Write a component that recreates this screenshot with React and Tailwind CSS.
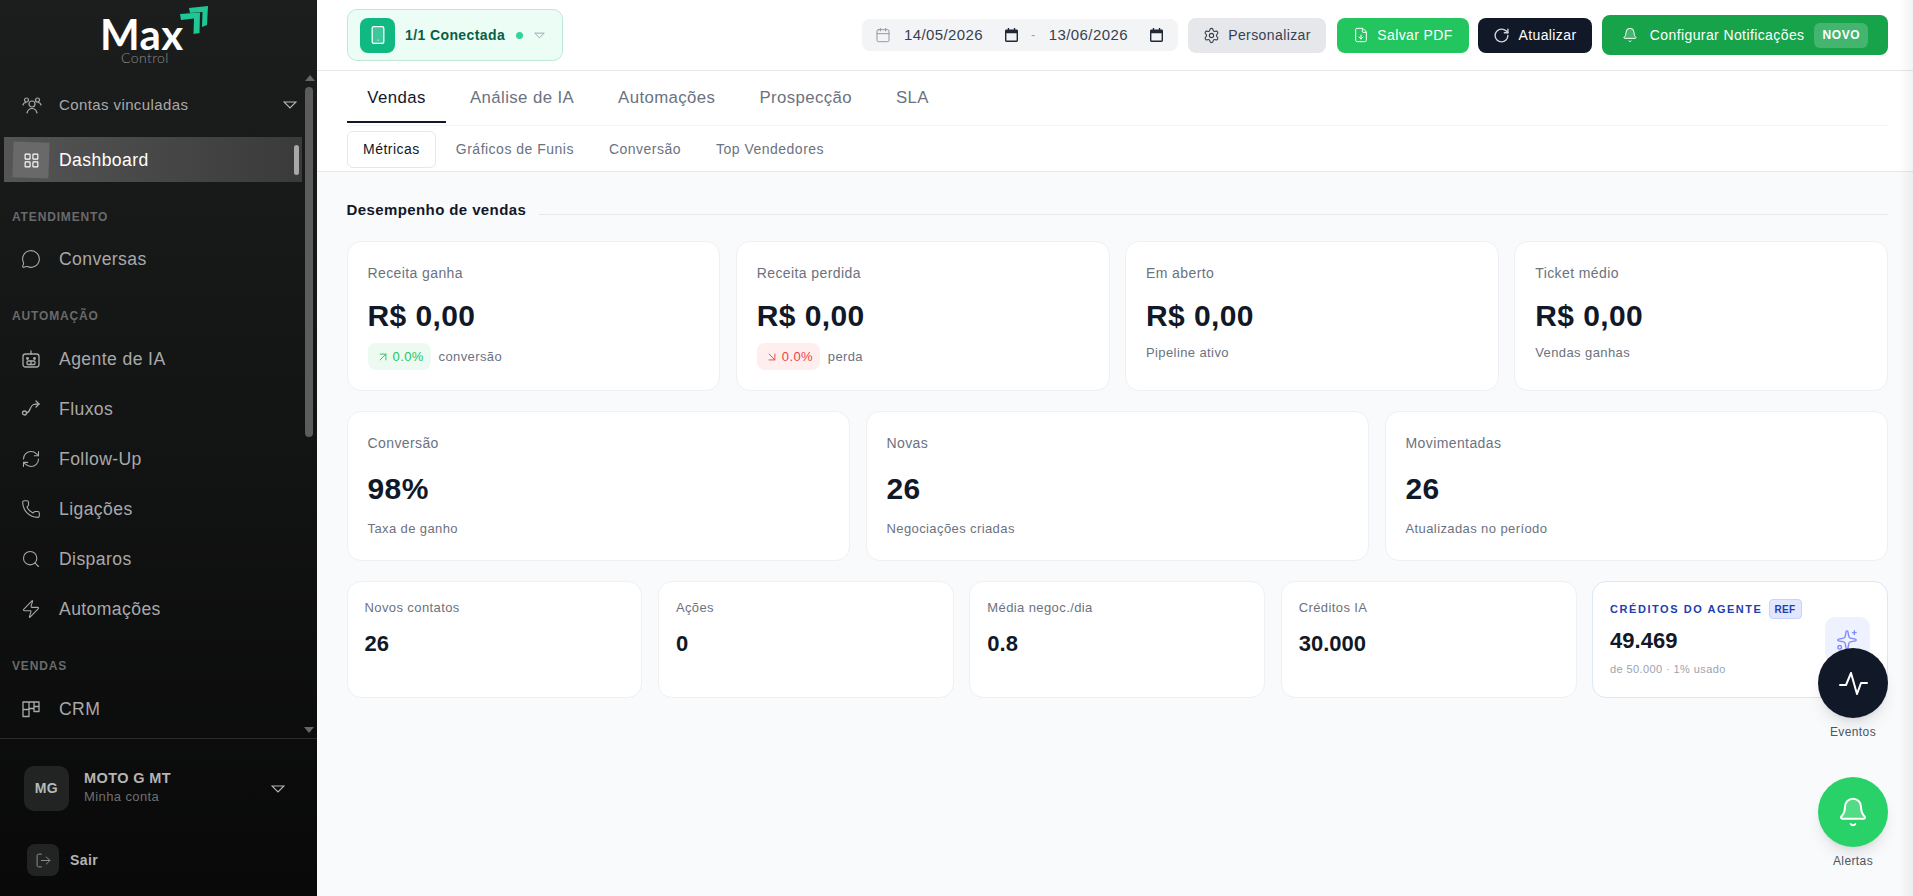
import React from "react";
import {
  Bell,
  Calendar,
  FileDown,
  LayoutGrid,
  LogOut,
  MessageCircle,
  Phone,
  RefreshCw,
  RotateCw,
  Search,
  Settings,
  Smartphone,
  Sparkles,
  Zap,
  ArrowUpRight,
  ArrowDownRight,
} from "lucide-react";

const Triangle = ({ className }) => (
  <svg viewBox="0 0 14 8" className={className} fill="none" stroke="currentColor" strokeWidth="1.2">
    <path d="M1 1h12L7 7z" />
  </svg>
);

const PickerIcon = () => (
  <svg viewBox="0 0 14 15" className="w-[13px] h-[14px] text-[#1f2937]" fill="currentColor">
    <path fillRule="evenodd" d="M3 0h1.500v1.500h5V0H11v1.500h1.500A1.500 1.500 0 0 1 14 3v10.500a1.500 1.500 0 0 1-1.500 1.500h-11A1.500 1.500 0 0 1 0 13.500V3a1.500 1.500 0 0 1 1.500-1.500H3zM1.500 5.500v8h11v-8z" />
  </svg>
);

// icons that lucide doesn't have in this shape
const PeopleIcon = ({ className }) => (
  <svg viewBox="0 0 20 20" className={className} fill="none" stroke="currentColor" strokeWidth="1.200" strokeLinecap="round">
    <circle cx="10" cy="9" r="3" />
    <path d="M5 18c.8-3 2.800-4.500 5-4.500s4.200 1.500 5 4.500" />
    <circle cx="4.500" cy="5" r="2" />
    <circle cx="15.500" cy="5" r="2" />
    <path d="M1 10c.3-1.400 1.500-2.500 3-2.500M19 10c-.3-1.400-1.500-2.500-3-2.500" />
  </svg>
);

const AgentIcon = ({ className }) => (
  <svg viewBox="0 0 20 20" className={className} fill="none" stroke="currentColor" strokeWidth="1.300" strokeLinecap="round">
    <rect x="2" y="5" width="16" height="13" rx="2.500" />
    <path d="M10 5V2" />
    <circle cx="6.500" cy="9.500" r=".8" fill="currentColor" />
    <circle cx="13.500" cy="9.500" r=".8" fill="currentColor" />
    <rect x="6" y="12" width="8" height="3.500" rx="1" />
    <path d="M10 12v3.500" />
  </svg>
);

const FlowIcon = ({ className }) => (
  <svg viewBox="0 0 20 20" className={className} fill="none" stroke="currentColor" strokeWidth="1.300" strokeLinecap="round" strokeLinejoin="round">
    <circle cx="3.500" cy="14" r="2" />
    <path d="M5.500 14c4 0 3-7 7-8.500 1.500-.5 3.500-.5 5.500-.5" />
    <path d="M15 2l3 3-3 3" />
  </svg>
);

const KanbanIcon = ({ className }) => (
  <svg viewBox="0 0 20 20" className={className} fill="none" stroke="currentColor" strokeWidth="1.300" strokeLinejoin="round">
    <path d="M2 3h16v9.500h-5v-3H8v8H2z" />
    <path d="M8 3v6.500M13 3v6.500M2 10.500h6M13 7.500h5" />
  </svg>
);

const PulseIcon = () => (
  <svg viewBox="0 0 29 23" className="w-[29px] h-[23px]" fill="none" stroke="white" strokeWidth="2" strokeLinecap="round" strokeLinejoin="round">
    <path d="M1 13h6L12 1l6 21 4-11h6" />
  </svg>
);

const NavItem = ({ icon: Icon, label }) => (
  <div className="flex items-center h-[50px] pl-[21px] text-[#a9a9a9] shrink-0">
    <Icon className="w-[20px] h-[20px] mr-[18px] shrink-0" strokeWidth={1.3} />
    <span className="text-[17.6px]">{label}</span>
  </div>
);

const SectionLabel = ({ children, className }) => (
  <div className={`pl-3 text-[12px] font-bold tracking-[0.07em] text-[#6a6a6a] ${className}`}>{children}</div>
);

const Sidebar = () => (
  <aside className="w-[317px] shrink-0 h-full flex flex-col bg-gradient-to-b from-[#1c1e1e] to-[#090909]">
    {/* logo */}
    <div className="h-[70px] shrink-0 pl-[103px]">
      <div className="relative w-[110px] h-[70px]">
        <span className="absolute left-[-3px] top-[15px] text-[42px] leading-[38px] font-bold text-white font-['Lato',sans-serif] tracking-[0.01em]">
          Max
        </span>
        <span className="absolute left-[18px] top-[53px] text-[14px] leading-[10px] font-light text-[#8a8a8a] font-['Lato',sans-serif]">
          Control
        </span>
        <svg viewBox="0 0 28 28" className="absolute left-[77px] top-[6px] w-[28px] h-[28px]" fill="#1fc796">
          <path d="M9 2L28 0l-1 19-5 2 .5-15L10 7z" />
          <path d="M0 8l20-1.500-.5 20.500-6 1 .5-15.500-13 1.500z" />
        </svg>
      </div>
    </div>

    <div className="relative flex-1 min-h-0 pr-[15px]">
      {/* fake scrollbar */}
      <div className="absolute right-[4px] top-0 bottom-0 w-[8px]">
        <div className="mx-auto mt-[5px] w-0 h-0 border-x-[5px] border-x-transparent border-b-[6px] border-b-[#666]" />
        <div className="mt-[6px] h-[350px] rounded-full bg-[#5c5c5c]" />
        <div className="absolute bottom-[5px] left-[-1px] w-0 h-0 border-x-[5px] border-x-transparent border-t-[6px] border-t-[#666]" />
      </div>

      <div className="flex items-center h-[50px] mt-[10px] pl-[22px] pr-[5px] text-[#a9a9a9]">
        <PeopleIcon className="w-[20px] h-[20px] mr-[17px]" />
        <span className="text-[15px] flex-1">Contas vinculadas</span>
        <Triangle className="w-[14px] h-[8px] text-[#b5b5b5]" />
      </div>

      <div className="relative flex items-center ml-[4px] mt-[7px] h-[45px] bg-gradient-to-r from-[#555555] to-[#3a3a3a]">
        <div className="ml-[9px] w-[36px] h-[36px] bg-[#696969] rotate-[2deg] flex items-center justify-center shrink-0">
          <LayoutGrid className="w-[17px] h-[17px] text-white -rotate-[2deg]" strokeWidth={1.6} />
        </div>
        <span className="ml-[10px] pt-[1px] text-[17.6px] text-white">Dashboard</span>
        <div className="absolute right-[3px] top-[8px] w-[5px] h-[30px] rounded-full bg-[#a8a8a8]" />
      </div>

      <SectionLabel className="mt-[26px]">ATENDIMENTO</SectionLabel>
      <div className="mt-[8px]">
        <NavItem icon={MessageCircle} label="Conversas" />
      </div>

      <SectionLabel className="mt-[23px]">AUTOMAÇÃO</SectionLabel>
      <div className="mt-[9px]">
        <NavItem icon={AgentIcon} label="Agente de IA" />
        <NavItem icon={FlowIcon} label="Fluxos" />
        <NavItem icon={RefreshCw} label="Follow-Up" />
        <NavItem icon={Phone} label="Ligações" />
        <NavItem icon={Search} label="Disparos" />
        <NavItem icon={Zap} label="Automações" />
      </div>

      <SectionLabel className="mt-[23px]">VENDAS</SectionLabel>
      <div className="mt-[9px]">
        <NavItem icon={KanbanIcon} label="CRM" />
      </div>
    </div>

    {/* user */}
    <div className="h-[158px] shrink-0 border-t border-[#2b2b2b] pt-[27px]">
      <div className="flex items-center pl-[24px] pr-[32px]">
        <div className="w-[45px] h-[45px] rounded-[10px] bg-[#222424] flex items-center justify-center text-[14px] font-bold text-[#b8b8b8] shrink-0">
          MG
        </div>
        <div className="ml-[15px] flex-1 mt-[-3px]">
          <div className="text-[14.5px] leading-[20px] font-bold text-[#b4b4b4]">MOTO G MT</div>
          <div className="text-[13px] leading-[18px] text-[#6f6f6f]">Minha conta</div>
        </div>
        <Triangle className="w-[14px] h-[8px] text-[#b5b5b5]" />
      </div>
      <div className="flex items-center mt-[33px] ml-[27px]">
        <div className="w-[32px] h-[32px] rounded-[8px] bg-[#222424] flex items-center justify-center">
          <LogOut className="w-[17px] h-[17px] text-[#8d8d8d]" strokeWidth={1.4} />
        </div>
        <span className="ml-[11px] text-[14px] font-bold text-[#b4b4b4]">Sair</span>
      </div>
    </div>
  </aside>
);

const Header = () => (
  <header className="h-[71px] shrink-0 bg-white border-b border-[#e5e7eb] flex items-center justify-between pl-[30px] pr-[25px]">
    <div className="flex items-center w-[216px] h-[52px] rounded-[10px] border border-[#bde8d6] bg-[#ecfdf5] pl-[12px]">
      <div className="w-[35px] h-[35px] rounded-[8px] bg-[#10b981] flex items-center justify-center">
        <Smartphone className="w-[20px] h-[20px] text-white" fill="rgba(255,255,255,0.2)" strokeWidth={1.5} />
      </div>
      <span className="ml-[10px] text-[14px] font-bold text-[#065f46]">1/1 Conectada</span>
      <span className="ml-[11px] w-[7px] h-[7px] rounded-full bg-[#34d399]" />
      <Triangle className="ml-[11px] w-[11px] h-[7px] text-[#9ca3af]" />
    </div>

    <div className="flex items-center">
      <div className="flex items-center w-[316px] h-[32px] rounded-[8px] bg-[#f3f4f6] pl-[13px] text-[15px] text-[#374151] mr-[10px]">
        <Calendar className="w-[16px] h-[16px] text-[#8b92a0] mr-[13px]" strokeWidth={1.4} />
        <span>14/05/2026</span>
        <span className="ml-[22px]"><PickerIcon /></span>
        <span className="mx-[13px] text-[#9ca3af] text-[13px]">-</span>
        <span>13/06/2026</span>
        <span className="ml-[22px]"><PickerIcon /></span>
      </div>
      <button className="flex items-center justify-center w-[138px] h-[35px] rounded-[8px] bg-[#e5e7eb] text-[14px] text-[#374151] mr-[11px]">
        <Settings className="w-[17px] h-[17px] mr-[8px]" strokeWidth={1.6} />
        Personalizar
      </button>
      <button className="flex items-center justify-center w-[132px] h-[35px] rounded-[8px] bg-[#22c55e] text-[14px] text-white mr-[9px]">
        <FileDown className="w-[16px] h-[16px] mr-[8px]" strokeWidth={1.5} />
        Salvar PDF
      </button>
      <button className="flex items-center justify-center w-[114px] h-[35px] rounded-[8px] bg-[#111827] text-[14px] text-white mr-[10px]">
        <RotateCw className="w-[17px] h-[17px] mr-[8px] text-[#d1d5db]" strokeWidth={2} />
        Atualizar
      </button>
      <button className="flex items-center justify-center w-[286px] h-[40px] rounded-[8px] bg-[#16a34a] text-[14px] text-white">
        <Bell className="w-[16px] h-[16px] mr-[12px]" strokeWidth={1.5} fill="rgba(255,255,255,0.2)" />
        Configurar Notificações
        <span className="ml-[10px] px-[8px] h-[25px] flex items-center rounded-[6px] bg-white/20 text-[12px] font-bold tracking-[0.05em]">
          NOVO
        </span>
      </button>
    </div>
  </header>
);

const tabs = ["Vendas", "Análise de IA", "Automações", "Prospecção", "SLA"];
const subTabs = ["Métricas", "Gráficos de Funis", "Conversão", "Top Vendedores"];

const Tabs = () => (
  <div className="shrink-0 bg-white border-b border-[#e5e7eb] pl-[30px] pr-[25px]">
    <div className="flex gap-[4px] h-[55px] border-b border-[#f3f4f6]">
      {tabs.map((t, i) => (
        <div
          key={t}
          className={`h-[52px] px-[20px] pt-[3px] flex items-center text-[16.8px] border-b-[2px] ${
            i === 0 ? "w-[99px] justify-center border-[#111827] text-[#111827]" : "border-transparent text-[#6b7280]"
          }`}
        >
          {t}
        </div>
      ))}
    </div>
    <div className="flex items-center gap-[5px] h-[45px] pt-[1px]">
      {subTabs.map((t, i) => (
        <div
          key={t}
          className={`h-[37px] px-[15px] flex items-center text-[14px] tracking-[0.035em] rounded-[6px] ${
            i === 0 ? "bg-white border border-[#e5e7eb] text-[#111827]" : "text-[#6b7280]"
          }`}
        >
          {t}
        </div>
      ))}
    </div>
  </div>
);

const Badge = ({ tone, children }) => {
  const Arrow = tone === "up" ? ArrowUpRight : ArrowDownRight;
  return (
    <span
      className={`inline-flex items-center h-[27px] w-[63px] pl-[8px] rounded-[8px] text-[13px] ${
        tone === "up" ? "bg-[#ecfaf1] text-[#22c55e]" : "bg-[#feeeee] text-[#ef4444]"
      }`}
    >
      <Arrow className="w-[14px] h-[14px] mr-[3px]" strokeWidth={1.6} />
      {children}
    </span>
  );
};

const BigCard = ({ label, value, sub, badge, spaced }) => (
  <div className="h-[150px] rounded-[14px] border border-[#eef0f3] bg-white px-[20px] pt-[21px]">
    <div className="text-[14px] leading-[20px] text-[#6b7280]">{label}</div>
    <div className={`text-[30px] leading-[36px] font-bold text-[#111827] ${spaced ? "mt-[18px]" : "mt-[15px]"}`}>
      {value}
    </div>
    {badge ? (
      <div className="mt-[9px] flex items-center text-[13px] text-[#6b7280]">
        <Badge tone={badge}>0.0%</Badge>
        <span className="ml-[8px]">{sub}</span>
      </div>
    ) : (
      <div className={`text-[13px] leading-[18px] text-[#6b7280] ${spaced ? "mt-[13px]" : "mt-[10px]"}`}>{sub}</div>
    )}
  </div>
);

const SmallCard = ({ label, value }) => (
  <div className="h-[117px] rounded-[14px] border border-[#eef0f3] bg-white pl-[17px] pt-[17px]">
    <div className="text-[13px] leading-[18px] text-[#6b7280]">{label}</div>
    <div className="mt-[13px] text-[22px] leading-[28px] font-bold text-[#111827] tracking-normal">{value}</div>
  </div>
);

const CreditsCard = () => (
  <div className="relative h-[117px] rounded-[14px] border border-[#dfe5fb] bg-white pl-[17px] pt-[17px]">
    <div className="flex items-center h-[20px]">
      <span className="text-[11px] font-bold tracking-[0.14em] text-[#1e40af]">CRÉDITOS DO AGENTE</span>
      <span className="ml-[6px] h-[20px] w-[33px] flex items-center justify-center rounded-[4px] border border-[#c7d2fe] bg-[#e0e7ff] text-[10px] font-bold text-[#1e40af]">
        REF
      </span>
    </div>
    <div className="mt-[8px] text-[22px] leading-[28px] font-bold text-[#111827] tracking-normal">49.469</div>
    <div className="mt-[6px] text-[11px] leading-[16px] text-[#9ca3af]">de 50.000 · 1% usado</div>
    <div className="absolute right-[17px] top-[35px] w-[45px] h-[45px] rounded-[10px] bg-[#eef2ff] flex items-center justify-center">
      <Sparkles className="w-[22px] h-[22px] text-[#818cf8]" strokeWidth={1.5} />
    </div>
  </div>
);

const Floating = ({ children, label, className }) => (
  <div className="flex flex-col items-center">
    <div className={`w-[70px] h-[70px] rounded-full flex items-center justify-center shadow-lg ${className}`}>
      {children}
    </div>
    <span className="mt-[6px] text-[12px] leading-[16px] text-[#4b5563]">{label}</span>
  </div>
);

export default function App() {
  return (
    <div className="relative flex w-full h-[896px] overflow-hidden bg-[#f9fafb] font-['Liberation_Sans',Arial,sans-serif] tracking-[0.025em]">
      <Sidebar />
      <main className="flex-1 min-w-0 flex flex-col">
        <Header />
        <Tabs />
        <div className="pl-[29.5px] pr-[25px] pt-[27px]">
          <div className="flex items-end h-[22px]">
            <h2 className="text-[15px] leading-[22px] font-bold text-[#111827]">Desempenho de vendas</h2>
            <div className="ml-[13px] flex-1 mb-[6px] h-px bg-[#e5e7eb]" />
          </div>
          <div className="mt-[20px] grid grid-cols-4 gap-[15.500px]">
            <BigCard label="Receita ganha" value="R$ 0,00" sub="conversão" badge="up" />
            <BigCard label="Receita perdida" value="R$ 0,00" sub="perda" badge="down" />
            <BigCard label="Em aberto" value="R$ 0,00" sub="Pipeline ativo" />
            <BigCard label="Ticket médio" value="R$ 0,00" sub="Vendas ganhas" />
          </div>
          <div className="mt-[20px] grid grid-cols-3 gap-[15.500px]">
            <BigCard label="Conversão" value="98%" sub="Taxa de ganho" spaced />
            <BigCard label="Novas" value="26" sub="Negociações criadas" spaced />
            <BigCard label="Movimentadas" value="26" sub="Atualizadas no período" spaced />
          </div>
          <div className="mt-[20px] grid grid-cols-5 gap-[15.500px]">
            <SmallCard label="Novos contatos" value="26" />
            <SmallCard label="Ações" value="0" />
            <SmallCard label="Média negoc./dia" value="0.8" />
            <SmallCard label="Créditos IA" value="30.000" />
            <CreditsCard />
          </div>
        </div>
      </main>

      {/* floating buttons */}
      <div className="absolute right-[25px] top-[648px] flex flex-col items-center gap-[37px]">
        <Floating label="Eventos" className="bg-[#111827]">
          <PulseIcon />
        </Floating>
        <Floating label="Alertas" className="bg-[#28d268]">
          <Bell className="w-[32px] h-[32px] text-white" strokeWidth={1.5} fill="rgba(255,255,255,0.2)" />
        </Floating>
      </div>
      {/* edge shadow from the closed drawer */}
      <div className="absolute right-0 top-0 bottom-0 w-[14px] bg-gradient-to-r from-transparent to-black/5 pointer-events-none" />
    </div>
  );
}
